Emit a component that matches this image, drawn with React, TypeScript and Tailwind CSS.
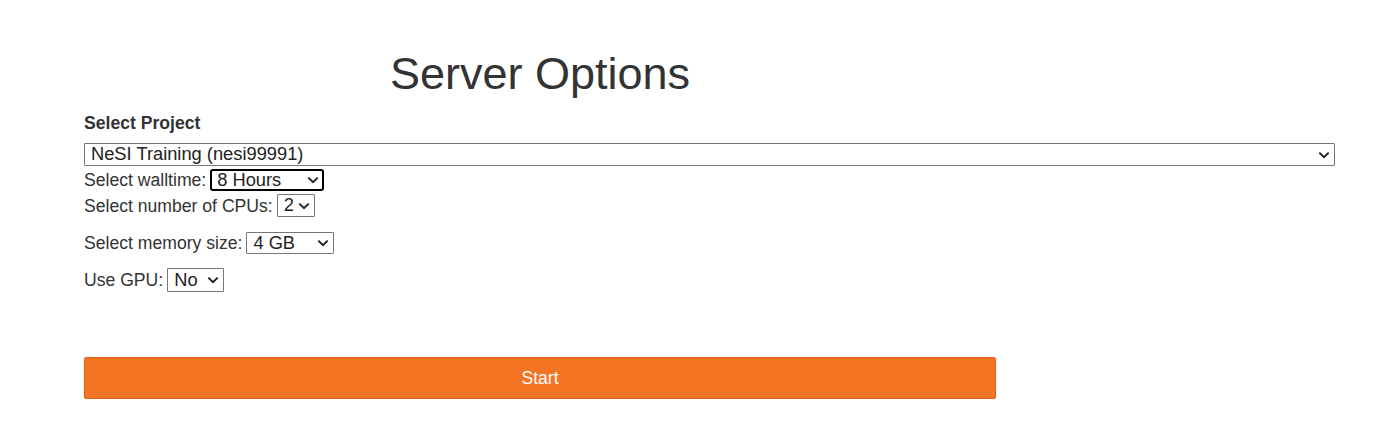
import type { ReactNode } from "react";

function Chevron() {
  return (
    <svg width="12" height="8" viewBox="0 0 12 8" className="pointer-events-none absolute right-[5px] top-1/2 -translate-y-1/2">
      <path d="M1.3 1.6L6 6.2L10.7 1.6" fill="none" stroke="#222" strokeWidth="2" />
    </svg>
  );
}

type SelectProps = {
  value: string;
  options: string[];
  className: string;
  focused?: boolean;
};

function Select({ value, options, className, focused = false }: SelectProps) {
  return (
    <div className={`relative ${className}`}>
      <select
        defaultValue={value}
        className={
          focused
            ? "h-full w-full appearance-none rounded-[3px] border-2 border-black bg-white pl-[5px] pr-5 text-[18.3px] leading-none text-[#222] outline-none"
            : "h-full w-full appearance-none rounded-[1px] border border-[#767676] bg-white pl-[6px] pr-5 text-[18.3px] leading-none text-[#222] outline-none"
        }>
        {options.map((o) => (
          <option key={o}>{o}</option>
        ))}
      </select>
      <Chevron />
    </div>
  );
}

function Row({ label, children, className }: { label: string; children: ReactNode; className: string }) {
  return (
    <div className={`flex items-center gap-[4px] ${className}`}>
      <span className="text-[17.6px] leading-[20px] text-[#333]">{label}</span>
      {children}
    </div>
  );
}

export default function App() {
  return (
    <div className="min-h-[421px] bg-white pl-[84px] pr-[40px] pt-[49px] font-['Liberation_Sans',Arial,sans-serif] text-[#333]">
      <h1 className="w-[912px] text-center text-[45px] leading-[50px] font-normal text-[#333]">Server Options</h1>

      <label className="mt-[14px] block text-[17.6px] leading-[20px] font-bold text-[#333]">Select Project</label>
      <Select
        value="NeSI Training (nesi99991)"
        options={["NeSI Training (nesi99991)"]}
        className="mt-[10px] h-[23px] w-full"
      />

      <Row label="Select walltime:" className="mt-[2px] h-[24px]">
        <Select value="8 Hours" options={["1 Hour", "2 Hours", "4 Hours", "8 Hours"]} className="h-[22px] w-[114px]" focused />
      </Row>

      <Row label="Select number of CPUs:" className="mt-[1px] h-[25px]">
        <Select value="2" options={["1", "2", "4"]} className="h-[23px] w-[38px]" />
      </Row>

      <Row label="Select memory size:" className="mt-[13px] h-[24px]">
        <Select value="4 GB" options={["2 GB", "4 GB", "8 GB"]} className="h-[22px] w-[88px]" />
      </Row>

      <Row label="Use GPU:" className="mt-[13px] h-[24px]">
        <Select value="No" options={["No", "Yes"]} className="h-[24px] w-[57px]" />
      </Row>

      <button
        type="button"
        className="mt-[65px] h-[42px] w-[912px] rounded-[2px] border border-[#e25e1b] bg-[#f37524] text-[17.6px] text-white">
        Start
      </button>
    </div>
  );
}
